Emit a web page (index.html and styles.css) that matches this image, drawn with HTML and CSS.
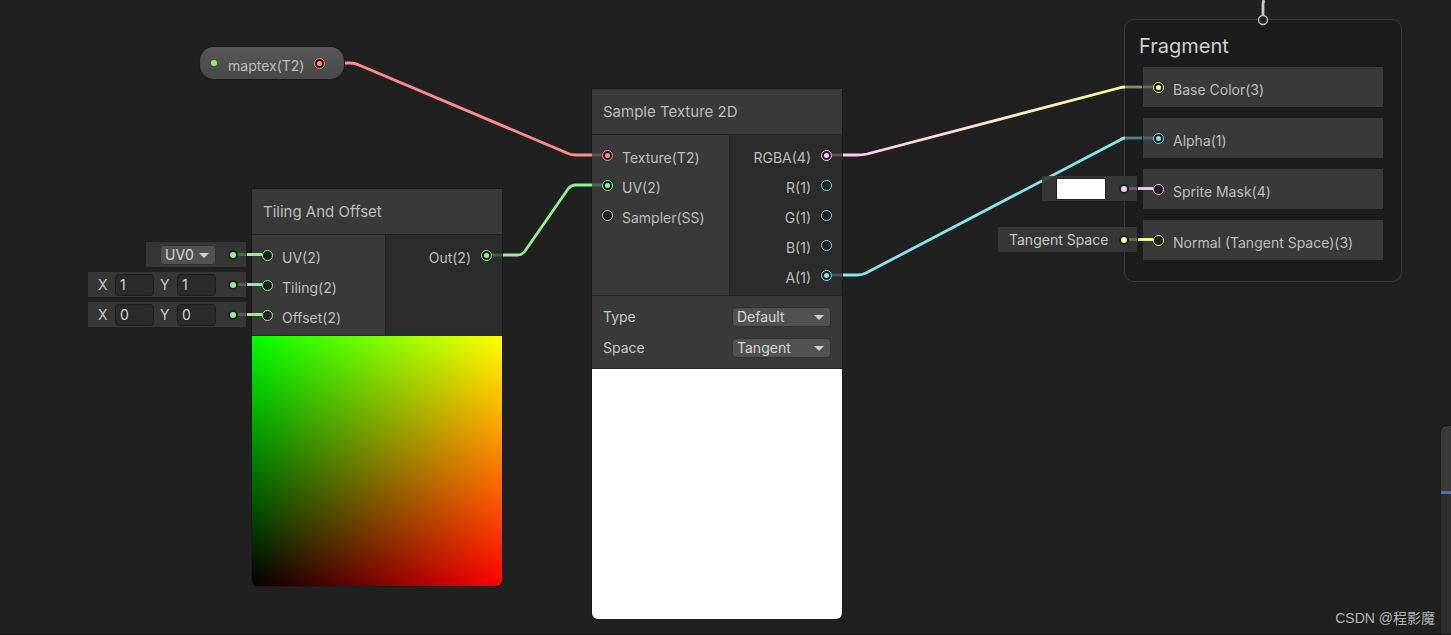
FILE: index.html
```html
<!DOCTYPE html>
<html lang="en">
<head>
<meta charset="utf-8">
<title>Shader Graph</title>
<link rel="stylesheet" href="styles.css">
</head>
<body>
<main class="graph">
  <section class="property" aria-label="maptex property">
    <span class="exposed"></span>
    <span class="property-name">maptex(T2)</span>
    <i class="port red on"></i>
  </section>

  <section class="node tiling">
    <h2 class="node-title">Tiling And Offset</h2>
    <div class="node-ports">
      <ul class="inputs">
        <li><i class="port green"></i><span>UV(2)</span></li>
        <li><i class="port green"></i><span>Tiling(2)</span></li>
        <li><i class="port green"></i><span>Offset(2)</span></li>
      </ul>
      <ul class="outputs">
        <li><span>Out(2)</span><i class="port green on"></i></li>
      </ul>
    </div>
    <div class="preview preview-uv"></div>
  </section>

  <section class="node sample">
    <h2 class="node-title">Sample Texture 2D</h2>
    <div class="node-ports">
      <ul class="inputs">
        <li><i class="port red on"></i><span>Texture(T2)</span></li>
        <li><i class="port green on"></i><span>UV(2)</span></li>
        <li><i class="port grey"></i><span>Sampler(SS)</span></li>
      </ul>
      <ul class="outputs">
        <li><span>RGBA(4)</span><i class="port pink on"></i></li>
        <li><span>R(1)</span><i class="port cyan"></i></li>
        <li><span>G(1)</span><i class="port cyan"></i></li>
        <li><span>B(1)</span><i class="port cyan"></i></li>
        <li><span>A(1)</span><i class="port cyan on"></i></li>
      </ul>
    </div>
    <div class="settings">
      <label for="type">Type</label>
      <span class="dropdown"><select id="type"><option>Default</option><option>Normal</option></select></span>
      <label for="space">Space</label>
      <span class="dropdown"><select id="space"><option>Tangent</option><option>Object</option></select></span>
    </div>
    <div class="preview preview-white"></div>
  </section>

  <section class="stack">
    <h2 class="stack-title">Fragment</h2>
    <ul class="blocks">
      <li><i class="port yellow on"></i><span>Base Color(3)</span></li>
      <li><i class="port cyan on"></i><span>Alpha(1)</span></li>
      <li><i class="port pink"></i><span>Sprite Mask(4)</span></li>
      <li><i class="port yellow"></i><span>Normal (Tangent Space)(3)</span></li>
    </ul>
  </section>

  <svg class="wires" width="1451" height="635" fill="none" stroke-width="2.8" aria-hidden="true">
    <defs>
      <linearGradient id="rgba" gradientUnits="userSpaceOnUse" x1="843" y1="0" x2="1124" y2="0">
        <stop offset="0" stop-color="#fbcbf4"/><stop offset="1" stop-color="#f6ff9a"/>
      </linearGradient>
    </defs>
    <path stroke="#ff8b8b" d="M345 63H350Q355 63 359 65L567 153Q571 155 575 155H592"/>
    <path stroke="#94ef93" d="M503 255H518Q522 255 525 251L568 189Q571 185 576 185H592"/>
    <path stroke="url(#rgba)" d="M843 155H857Q862 155 867 154L1119 88Q1122 87 1125 87"/>
    <path stroke="#84e4e7" d="M843 275H857Q862 275 866 273L1120 140Q1123 138 1125 138"/>
    <path stroke="#c8c8c8" d="M1264 0Q1263 2 1263 5V15"/>
    <circle cx="1263" cy="20" r="4.5" fill="#202020" stroke="#c8c8c8" stroke-width="1.3"/>
    <g stroke-opacity=".25">
      <path stroke="#ff8b8b" d="M592 155H602"/>
      <path stroke="#94ef93" d="M592 185H602M492 255H502"/>
      <path stroke="#fbcbf4" d="M832 155H842"/>
      <path stroke="#84e4e7" d="M832 275H842M1143 138H1153"/>
      <path stroke="#f6ff9a" d="M1143 87H1153"/>
    </g>
    <path stroke="#f6ff9a" stroke-opacity=".5" d="M1125 87H1142"/>
    <path stroke="#84e4e7" stroke-opacity=".5" d="M1125 138H1142"/>
    <path stroke="#94ef93" d="M247 254.500H262M247 284.500H262M247 314.500H262"/>
    <path stroke="#fbcbf4" d="M1138 188.500H1153"/>
    <path stroke="#f6ff9a" d="M1138 239.500H1153"/>
  </svg>

  <div class="feeder feeder-uv green">
    <span class="dropdown small"><select aria-label="UV channel"><option>UV0</option><option>UV1</option></select></span>
    <i class="plug"></i>
  </div>
  <div class="feeder feeder-tiling green">
    <label for="tx">X</label><input id="tx" value="1">
    <label for="ty">Y</label><input id="ty" value="1">
    <i class="plug"></i>
  </div>
  <div class="feeder feeder-offset green">
    <label for="ox">X</label><input id="ox" value="0">
    <label for="oy">Y</label><input id="oy" value="0">
    <i class="plug"></i>
  </div>
  <div class="feeder feeder-mask pink">
    <button class="swatch" type="button" aria-label="Sprite mask colour"></button>
    <i class="plug"></i>
  </div>
  <div class="feeder feeder-normal yellow">
    <span>Tangent Space</span>
    <i class="plug"></i>
  </div>

  <aside class="panel"><div class="panel-head"></div></aside>
  <p class="watermark">CSDN @程影魔</p>
</main>
</body>
</html>
```
FILE: styles.css
```css
*, *::before, *::after { box-sizing: border-box; }
body {
  margin: 0;
  background: #202020;
  color: #bdbdbd;
  font: 14px/20px Inter, "Noto Sans CJK SC", sans-serif;
}
h2, ul, p { margin: 0; padding: 0; }
ul { list-style: none; }
select, input, button { font: inherit; color: #d6d6d6; }

.graph {
  position: relative;
  min-height: 100vh;
  overflow: hidden;
  border-bottom: 1px solid #151515;
}
.wires { position: absolute; left: 0; top: 0; }

.green { --c: #94ef93; }
.red { --c: #ff8b8b; }
.pink { --c: #fbcbf4; }
.cyan { --c: #84e4e7; }
.yellow { --c: #f6ff9a; }
.grey { --c: #c8c8c8; }

.port {
  flex: none;
  width: 11px;
  height: 11px;
  margin-top: 1px;
  padding: 2px;
  border: 1px solid var(--c);
  border-radius: 50%;
  background: #202020;
}
.port.on::before {
  content: "";
  display: block;
  width: 5px;
  height: 5px;
  border-radius: 50%;
  background: var(--c);
}

/* property pill */
.property {
  position: absolute;
  left: 200px;
  top: 47px;
  display: flex;
  align-items: center;
  width: 144px;
  height: 32px;
  padding: 0 19px 0 11px;
  border-radius: 14px;
  background: linear-gradient(#585858, #474747);
  box-shadow: 0 0 0 1px #1a1a1a;
}
.exposed {
  width: 6px;
  height: 6px;
  margin-right: 11px;
  border-radius: 50%;
  background: #93f060;
}
.property-name { padding-top: 6px; }
.property .port { margin-left: auto; }

/* nodes */
.node {
  position: absolute;
  width: 250px;
  border-radius: 0 0 6px 6px;
  background: #393939;
  box-shadow: 0 0 0 1px #1a1a1a;
  overflow: hidden;
}
.tiling { left: 252px; top: 189px; --split: 134px; }
.sample { left: 592px; top: 89px; --split: 138px; }
.node-title {
  height: 46px;
  padding: 13px 11px;
  border-bottom: 1px solid #232323;
  font-size: 15px;
  font-weight: 400;
}
.node-ports {
  display: grid;
  grid-template-columns: var(--split) 1fr;
  border-bottom: 1px solid #232323;
}
.inputs, .outputs { padding: 5px 10px; }
.inputs { border-right: 1px solid #232323; }
.outputs { background: #2b2b2b; }
.node-ports li { display: flex; align-items: center; gap: 9px; height: 30px; }
.node-ports span { padding-top: 6px; }
.node-ports .outputs li { justify-content: flex-end; gap: 10px; }
.preview { height: 250px; }
.preview-uv {
  background: linear-gradient(to right, #000, #f00), linear-gradient(to top, #000, #0f0);
  background-blend-mode: screen;
}
.preview-white { background: #fff; }

.settings {
  display: grid;
  grid-template-columns: 1fr 99px;
  gap: 11px;
  padding: 11px 11px 10px;
  border-bottom: 1px solid #232323;
  color: #c8c8c8;
}
.dropdown { position: relative; display: block; }
.dropdown::after {
  content: "";
  position: absolute;
  right: 7px;
  top: 8px;
  border: 5px solid transparent;
  border-top-color: #d0d0d0;
  border-bottom: 0;
  pointer-events: none;
}
.dropdown select {
  display: block;
  appearance: none;
  width: 100%;
  height: 20px;
  padding: 0 4px;
  border: 1px solid #303030;
  border-radius: 4px;
  background: #515151;
  line-height: 18px;
}

/* master stack */
.stack {
  position: absolute;
  left: 1124px;
  top: 19px;
  width: 278px;
  padding: 14px 18px 21px;
  border: 1px solid #393939;
  border-radius: 10px;
  background: #1c1c1c;
}
.stack-title {
  margin-left: -4px;
  padding-bottom: 9px;
  font-size: 20px;
  line-height: 24px;
  font-weight: 400;
  color: #cfcfcf;
}
.blocks { display: grid; gap: 11px; }
.blocks li {
  display: flex;
  align-items: center;
  gap: 9px;
  height: 40px;
  padding-left: 10px;
  background: #393939;
}
.blocks span { padding-top: 5px; }

/* inline value editors */
.feeder {
  position: absolute;
  display: flex;
  align-items: center;
  height: 25px;
  background: rgba(57, 57, 57, .9);
  color: #c8c8c8;
}
.feeder-uv { left: 146px; top: 242px; width: 100px; padding-left: 14px; }
.feeder-tiling { left: 88px; top: 272px; width: 158px; padding-left: 10px; }
.feeder-offset { left: 88px; top: 302px; width: 158px; padding-left: 10px; }
.feeder-mask { left: 1042px; top: 176px; width: 95px; padding-left: 14px; }
.feeder-normal { left: 998px; top: 227px; width: 139px; padding-left: 11px; }
.feeder label { width: 17px; }
.feeder input {
  width: 39px;
  height: 22px;
  margin-right: 6px;
  padding: 0 4px;
  border: 1px solid #1c1c1c;
  border-radius: 4px;
  background: #2a2a2a;
}
.small { width: 56px; }
.swatch { width: 50px; height: 22px; padding: 0; border: 1px solid #202020; background: #fff; }
.plug {
  display: flex;
  align-items: center;
  margin-left: auto;
}
.plug::before {
  content: "";
  width: 10px;
  height: 10px;
  border: 2px solid #202020;
  border-radius: 50%;
  background: var(--c);
}
.plug::after {
  content: "";
  width: 8px;
  height: 3px;
  background: var(--c);
  opacity: .25;
}

.panel {
  position: absolute;
  right: 0;
  top: 426px;
  bottom: 0;
  width: 10px;
  border-radius: 6px 0 0 0;
  background: #2e2e2e;
  box-shadow: 0 0 0 1px #1a1a1a;
  overflow: hidden;
}
.panel-head { height: 68px; border-bottom: 3px solid #3a79bb; background: #393939; }
.watermark {
  position: absolute;
  right: 16px;
  bottom: 6px;
  color: #b4b4b4;
  font-family: "Liberation Sans", "Noto Sans CJK SC", sans-serif;
}
```
